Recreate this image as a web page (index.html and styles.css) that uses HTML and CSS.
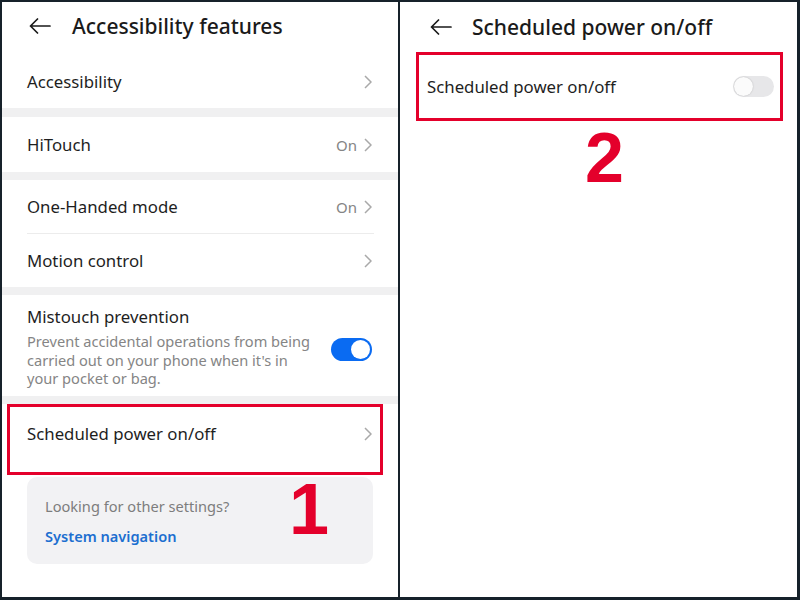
FILE: index.html
```html
<!DOCTYPE html>
<html>
<head>
<meta charset="utf-8">
<link rel="stylesheet" href="styles.css">
</head>
<body>
<div class="frame">
  <section class="panel left">
    <header class="header">
      <svg class="back" width="22" height="16" viewBox="0 0 22 16"><path d="M21 8H1.5M8.5 1L1.5 8l7 7" fill="none" stroke="#1a1a1a" stroke-width="1.7" stroke-linecap="round" stroke-linejoin="round"/></svg>
      <h1 class="title">Accessibility features</h1>
    </header>
    <div class="group first">
      <div class="row"><span class="label">Accessibility</span><span class="end"><svg class="chev" width="8" height="14" viewBox="0 0 8 14"><path d="M1 1l6 6-6 6" fill="none" stroke="#a9a9a9" stroke-width="1.5"/></svg></span></div>
    </div>
    <div class="gap"></div>
    <div class="group">
      <div class="row tall"><span class="label">HiTouch</span><span class="end"><span class="val">On</span><svg class="chev" width="8" height="14" viewBox="0 0 8 14"><path d="M1 1l6 6-6 6" fill="none" stroke="#a9a9a9" stroke-width="1.5"/></svg></span></div>
    </div>
    <div class="gap small"></div>
    <div class="group">
      <div class="row mid divided"><span class="label">One-Handed mode</span><span class="end"><span class="val">On</span><svg class="chev" width="8" height="14" viewBox="0 0 8 14"><path d="M1 1l6 6-6 6" fill="none" stroke="#a9a9a9" stroke-width="1.5"/></svg></span></div>
      <div class="row mid"><span class="label">Motion control</span><span class="end"><svg class="chev" width="8" height="14" viewBox="0 0 8 14"><path d="M1 1l6 6-6 6" fill="none" stroke="#a9a9a9" stroke-width="1.5"/></svg></span></div>
    </div>
    <div class="gap small"></div>
    <div class="group">
      <div class="block">
        <div class="block-text">
          <div class="label">Mistouch prevention</div>
          <div class="desc">Prevent accidental operations from being carried out on your phone when it's in your pocket or bag.</div>
        </div>
        <span class="toggle on"><span class="knob"></span></span>
      </div>
    </div>
    <div class="gap small"></div>
    <div class="row boxed"><span class="label">Scheduled power on/off</span><span class="end"><svg class="chev" width="8" height="14" viewBox="0 0 8 14"><path d="M1 1l6 6-6 6" fill="none" stroke="#a9a9a9" stroke-width="1.5"/></svg></span></div>
    <div class="card">
      <div class="card-q">Looking for other settings?</div>
      <div class="card-link">System navigation</div>
    </div>
    <span class="step step1">1</span>
  </section>
  <section class="panel right">
    <header class="header rh">
      <svg class="back" width="22" height="16" viewBox="0 0 22 16"><path d="M21 8H1.5M8.5 1L1.5 8l7 7" fill="none" stroke="#1a1a1a" stroke-width="1.7" stroke-linecap="round" stroke-linejoin="round"/></svg>
      <h1 class="title">Scheduled power on/off</h1>
    </header>
    <div class="row boxed2"><span class="label">Scheduled power on/off</span><span class="toggle off"><span class="knob"></span></span></div>
    <span class="step step2">2</span>
  </section>
</div>
</body>
</html>
```
FILE: styles.css
```css
* { box-sizing: border-box; margin: 0; padding: 0; }
html, body { width: 800px; height: 600px; overflow: hidden; }
body { background: #16212a; font-family: "Noto Sans", Roboto, "Liberation Sans", sans-serif; color: #1c1c1c; }
.frame { display: flex; gap: 2px; width: 800px; height: 600px; padding: 2px 3px 3px 2px; }
.panel { position: relative; background: #fff; overflow: hidden; }
.left { width: 396px; flex: none; }
.right { flex: 1; }

.header { display: flex; align-items: center; height: 48px; padding-left: 27px; }
.back { flex: none; }
.title { font-size: 21px; font-weight: 500; line-height: 26px; margin-left: 21px; color: #1a1a1a; }
.rh { height: 50px; padding-left: 30px; }
.rh .title { margin-left: 20px; }

.group.first { margin-top: 6px; }
.row { display: flex; align-items: center; justify-content: space-between; height: 52px; padding: 0 26px 0 25px; }
.row.tall { height: 55px; }
.row.mid { height: 53px; }
.row.divided { position: relative; }
.row.divided::after { content: ""; position: absolute; left: 25px; right: 24px; bottom: -1px; height: 1px; background: #ececec; }
.row.divided + .row { margin-top: 1px; }
.label { font-size: 16.8px; line-height: 22px; color: #1e1e1e; }
.end { display: flex; align-items: center; gap: 7px; }
.val { font-size: 15px; line-height: 20px; color: #858585; }
.chev { display: block; }

.gap { height: 9px; background: #f0f0f1; }
.gap.small { height: 8px; }

.block { display: flex; align-items: center; justify-content: space-between; padding: 11px 26px 8px 25px; }
.block-text { width: 286px; }
.desc { font-size: 14.6px; line-height: 18.5px; color: #858585; margin-top: 4px; }

.toggle { position: relative; flex: none; width: 41px; height: 23px; border-radius: 12px; }
.toggle.on { background: #0a6bf2; margin-top: 6px; }
.toggle.on .knob { position: absolute; right: 2px; top: 2px; width: 19px; height: 19px; border-radius: 50%; background: #fff; }
.toggle.off { background: #e7e7e9; width: 41px; height: 21px; }
.toggle.off .knob { position: absolute; left: 1px; top: 1px; width: 19px; height: 19px; border-radius: 50%; background: #fbfbfb; box-shadow: 0 0 1.5px rgba(0,0,0,0.25); }

.boxed { height: 71px; margin: 0 15px 0 5px; border: 3px solid #e4002b; align-items: flex-start; padding: 16px 8px 0 17px; }
.boxed .chev { margin-top: 4px; }

.card { margin: 2px 25px 0 25px; height: 87px; border-radius: 10px; background: #f2f2f4; padding: 19px 18px 0 18px; }
.card-q { font-size: 14.6px; line-height: 20px; color: #7d7d7d; }
.card-link { font-size: 14.6px; line-height: 20px; font-weight: 600; color: #1d6fd0; margin-top: 10px; }

.step { position: absolute; font-family: "Liberation Sans", Arial, sans-serif; font-weight: 700; color: #e4002b; line-height: 1; }
.step1 { font-size: 72px; left: 287px; top: 471px; }
.step2 { font-size: 70px; left: 185px; top: 121px; }

.boxed2 { height: 69px; margin: 0 14px 0 16px; border: 3px solid #e4002b; padding: 0 6px 0 8px; }
```
